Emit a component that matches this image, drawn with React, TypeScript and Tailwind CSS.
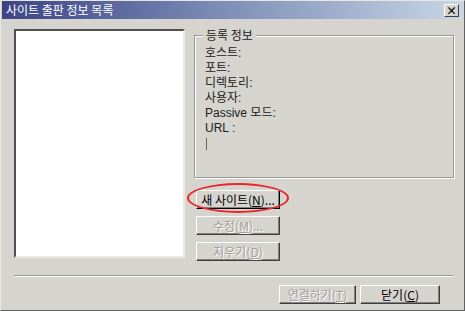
import React from "react"

const font = { fontFamily: '"Noto Sans CJK KR", "Noto Sans", sans-serif' }
const listFont = { fontFamily: '"Liberation Sans", "Noto Sans CJK KR", sans-serif' }

const fields = ["호스트:", "포트:", "디렉토리:", "사용자:", "Passive 모드:", "URL :"]

function Btn({
  label,
  hot,
  rest,
  disabled,
  strong,
  width,
}: {
  label: string
  hot: string
  rest: string
  disabled?: boolean
  strong?: boolean
  width: string
}) {
  return (
    <div
      className={`${width} h-[19px] flex items-center justify-center border ${
        strong ? "border-t-white border-l-white border-r-black border-b-black" : "border-t-white border-l-white border-r-[#404040] border-b-[#404040]"
      } shadow-[inset_-1px_-1px_#808080] text-[12px] leading-none ${disabled ? "text-[#a09e9a]" : "text-black"}`}
    >
      <span className={disabled ? "[text-shadow:1px_1px_0_#ffffff]" : ""}>
        {label}(<span className="underline">{hot}</span>){rest}
      </span>
    </div>
  )
}

export default function App() {
  return (
    <div className="w-[465px] h-[311px] bg-[#d6d4cf] overflow-hidden" style={font}>
      <div className="w-full h-full flex flex-col border border-t-[#e8e6e2] border-l-[#e8e6e2] border-r-[#606060] border-b-[#606060]">
        {/* Title bar */}
        <div className="h-[18px] mx-[1px] flex items-center justify-between pl-[4px] pr-[4px] bg-gradient-to-r from-[#3c4486] via-[#8290b8] to-[#c8d6e6]">
          <span className="text-white text-[12px] leading-none">사이트 출판 정보 목록</span>
          <div className="w-[15px] h-[13px] flex items-center justify-center bg-[#d6d4cf] border border-t-white border-l-white border-r-[#404040] border-b-[#404040] text-[11px] font-bold leading-none text-black">
            ×
          </div>
        </div>

        {/* Body */}
        <div className="flex pt-[10px] pl-[13px]">
          {/* List box */}
          <div className="w-[171px] h-[229px] bg-white border-2 border-t-[#505050] border-l-[#505050] border-r-[#ebe9e6] border-b-[#ebe9e6]" />

          {/* Right column */}
          <div className="ml-[9px] w-[260px] flex flex-col">
            <div className="relative mt-[6px] h-[143px] border border-[#9a9894] shadow-[1px_1px_0_#ffffff,inset_1px_1px_0_#ffffff]">
              <span className="absolute -top-[9px] left-[8px] px-[3px] bg-[#d6d4cf] text-[12px] leading-[16px] text-[#202020]">
                등록 정보
              </span>
              <div className="pt-[10px] pl-[10px] flex flex-col text-[12px] text-[#202020]" style={listFont}>
                {fields.map((f) => (
                  <div key={f} className="h-[15px] flex items-center">
                    <span className="leading-[13px]">{f}</span>
                  </div>
                ))}
                <span className="w-[1px] h-[12px] bg-[#606060] mt-[2px] ml-[1px]" />
              </div>
            </div>

            <div className="mt-[12px] ml-[2px] flex flex-col gap-[7px]">
              <div className="relative">
                <Btn label="새 사이트" hot="N" rest="..." strong width="w-[84px]" />
                <div className="absolute -left-[9px] -top-[7px] w-[102px] h-[30px] rounded-[50%] border-2 border-[#e8262a]" />
              </div>
              <Btn label="수정" hot="M" rest="..." disabled width="w-[84px]" />
              <Btn label="지우기" hot="D" rest="" disabled width="w-[84px]" />
            </div>
          </div>
        </div>

        {/* Separator */}
        <div className="mt-[14px] ml-[13px] w-[439px] h-[2px] border-t border-t-[#9a9894] border-b border-b-white" />

        {/* Bottom buttons */}
        <div className="mt-[8px] ml-[278px] flex gap-[4px]">
          <Btn label="연결하기" hot="T" rest="" disabled width="w-[77px]" />
          <Btn label="닫기" hot="C" rest="" width="w-[80px]" />
        </div>
      </div>
    </div>
  )
}
